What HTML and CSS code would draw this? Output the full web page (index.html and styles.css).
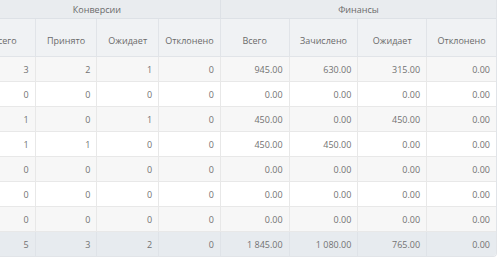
FILE: index.html
```html
<!DOCTYPE html>
<html lang="ru">
<head>
<meta charset="utf-8">
<link rel="stylesheet" href="styles.css">
</head>
<body>
<div class="viewport">
<table class="stats">
<colgroup>
<col class="c-conv"><col class="c-conv"><col class="c-conv"><col class="c-conv">
<col class="c-fin"><col class="c-fin"><col class="c-fin"><col class="c-fin">
</colgroup>
<thead>
<tr class="group"><th colspan="4">Конверсии</th><th colspan="4">Финансы</th></tr>
<tr class="cols"><th>Всего</th><th>Принято</th><th>Ожидает</th><th>Отклонено</th><th>Всего</th><th>Зачислено</th><th>Ожидает</th><th>Отклонено</th></tr>
</thead>
<tbody>
<tr class="odd"><td>3</td><td>2</td><td>1</td><td>0</td><td>945.00</td><td>630.00</td><td>315.00</td><td>0.00</td></tr>
<tr><td>0</td><td>0</td><td>0</td><td>0</td><td>0.00</td><td>0.00</td><td>0.00</td><td>0.00</td></tr>
<tr class="odd"><td>1</td><td>0</td><td>1</td><td>0</td><td>450.00</td><td>0.00</td><td>450.00</td><td>0.00</td></tr>
<tr><td>1</td><td>1</td><td>0</td><td>0</td><td>450.00</td><td>450.00</td><td>0.00</td><td>0.00</td></tr>
<tr class="odd"><td>0</td><td>0</td><td>0</td><td>0</td><td>0.00</td><td>0.00</td><td>0.00</td><td>0.00</td></tr>
<tr><td>0</td><td>0</td><td>0</td><td>0</td><td>0.00</td><td>0.00</td><td>0.00</td><td>0.00</td></tr>
<tr class="odd"><td>0</td><td>0</td><td>0</td><td>0</td><td>0.00</td><td>0.00</td><td>0.00</td><td>0.00</td></tr>
</tbody>
<tfoot>
<tr><td>5</td><td>3</td><td>2</td><td>0</td><td>1 845.00</td><td>1 080.00</td><td>765.00</td><td>0.00</td></tr>
</tfoot>
</table>
</div>
</body>
</html>
```
FILE: styles.css
```css
html, body {
  margin: 0;
  padding: 0;
  background: #ffffff;
}
.viewport {
  width: 500px;
  height: 258px;
  overflow: hidden;
}
.stats {
  margin-left: -26px;
  border-collapse: separate;
  border-spacing: 0;
  table-layout: fixed;
  width: 522px;
  font-family: "Open Sans", "Liberation Sans", sans-serif;
  font-size: 9px;
  color: #727272;
  border-right: 1px solid #e1e4e8;
  border-bottom: 1px solid #e1e4e8;
  border-bottom-right-radius: 4px;
  overflow: hidden;
}
.c-conv { width: 61.7px; }
.c-fin { width: 68.8px; }
.stats th {
  font-weight: normal;
  text-align: center;
  color: #6a6a6a;
  padding: 0;
}
.group th {
  height: 18px;
  background: #e9ecef;
  border-bottom: 1px solid #dde1e6;
  border-right: 1px solid #dde1e6;
}
.cols th {
  height: 31px;
  padding-top: 6px;
  background: #f0f2f4;
  border-right: 1px solid #e1e4e8;
  border-bottom: 1px solid #e1e4e8;
  vertical-align: middle;
}
.stats td {
  height: 24px;
  padding: 0 6px 0 0;
  text-align: right;
  border-right: 1px solid #e8e8e8;
  border-bottom: 1px solid #e8e8e8;
  background: #ffffff;
}
.stats tr.odd td {
  background: #f7f7f7;
}
.stats tfoot td {
  background: #e7ebef;
  border-bottom: 0;
  border-right-color: #dfe3e8;
}
.stats tr > :last-child {
  border-right: 0;
}
```
